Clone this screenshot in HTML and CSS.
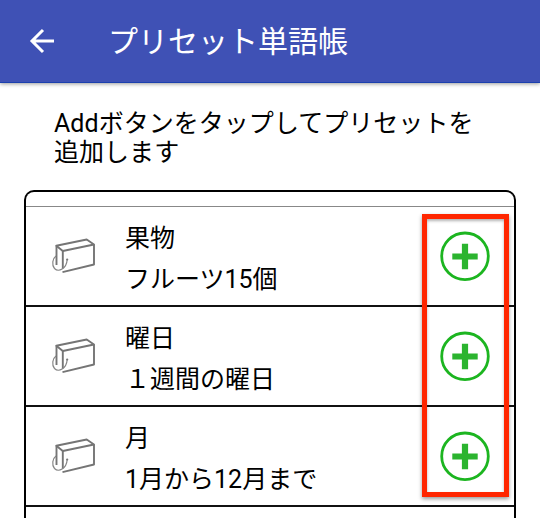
FILE: index.html
```html
<!DOCTYPE html>
<html lang="ja">
<head>
<meta charset="utf-8">
<title>プリセット単語帳</title>
<link rel="stylesheet" href="styles.css">
</head>
<body>
<svg class="defs" aria-hidden="true">
  <symbol id="book" viewBox="0 0 50 50">
    <g fill="none" stroke="#757575" stroke-width="1.900" stroke-linejoin="round">
      <path d="M8.300 14.700 38.700 8.500 46 13.500 14.800 20Z"/>
      <path d="M14.800 20V37.500M14.500 41.200 46 33.500V13.500M8.500 14.700V34"/>
    </g>
    <path d="M8 25C4.500 27.500 3.500 34 6.500 37.500C10.500 41.500 18.500 38 19.200 28.500" fill="none" stroke="#858585" stroke-width="1.2"/>
    <circle cx="19.200" cy="28.500" r="1.100" fill="#757575"/>
  </symbol>
  <symbol id="plus" viewBox="0 0 50 50">
    <circle cx="25" cy="25.300" r="23.300" fill="#fff" stroke="#1cb520" stroke-width="2.800"/>
    <path d="M12.300 25.500H37.700M25 12.800V38.200" stroke="#2bb42f" stroke-width="6.200"/>
  </symbol>
</svg>
<header class="bar">
  <svg class="back" viewBox="0 0 26 26"><path d="M25 13H3M14 2 3 13 14 24" fill="none" stroke="#fff" stroke-width="3"/></svg>
  <h1 class="title">プリセット単語帳</h1>
</header>
<main>
  <p class="intro">Addボタンをタップしてプリセットを<br>追加します</p>
  <section class="list">
    <div class="item">
      <svg class="book"><use href="#book"/></svg>
      <div class="text"><div>果物</div><div>フルーツ15個</div></div>
      <svg class="add"><use href="#plus"/></svg>
    </div>
    <div class="item">
      <svg class="book"><use href="#book"/></svg>
      <div class="text"><div>曜日</div><div>１週間の曜日</div></div>
      <svg class="add"><use href="#plus"/></svg>
    </div>
    <div class="item">
      <svg class="book"><use href="#book"/></svg>
      <div class="text"><div>月</div><div>1月から12月まで</div></div>
      <svg class="add"><use href="#plus"/></svg>
    </div>
    <div class="highlight"></div>
  </section>
</main>
</body>
</html>
```
FILE: styles.css
```css
* { box-sizing: border-box; }
body {
  margin: 0;
  height: 518px;
  overflow: hidden;
  background: #fff;
  color: #000;
  font-family: Roboto, "Noto Sans CJK JP", sans-serif;
  font-size: 25px;
}
.defs { display: none; }
.bar {
  display: flex;
  align-items: center;
  height: 83px;
  padding-left: 29px;
  background: #3f51b5;
  border-bottom: 1px solid #1c40ae;
  box-shadow: 0 1px 4px rgba(0, 0, 0, .4);
}
.back { width: 26px; height: 26px; }
.title {
  margin: 1px 0 0 53px;
  color: #fff;
  font-size: 30px;
  font-weight: 400;
  line-height: 40px;
}
.intro {
  margin: 26px 0 0 54px;
  line-height: 29px;
  letter-spacing: .04px;
  white-space: nowrap;
}
.list {
  position: relative;
  width: 492px;
  height: 328px;
  margin: 23px 0 0 24px;
  padding-top: 14px;
  border: 2px solid #000;
  border-bottom: 0;
  border-radius: 10px 10px 0 0;
}
.item {
  display: flex;
  align-items: center;
  height: 100px;
  padding: 0 24px 0 22px;
  border-bottom: 2px solid #111;
}
.item:first-of-type {
  height: 101px;
  border-top: 1px solid #888;
}
.book { width: 50px; height: 50px; }
.text { flex: 1; margin-left: 27px; padding-top: 6px; line-height: 41px; }
.add { width: 50px; height: 50px; }
.highlight {
  position: absolute;
  left: 396px;
  top: 22px;
  width: 87px;
  height: 283px;
  border: 5px solid #ff2600;
  box-shadow: 0 2px 4px rgba(0, 0, 0, .4), inset 0 2px 3px rgba(0, 0, 0, .3);
}
```
